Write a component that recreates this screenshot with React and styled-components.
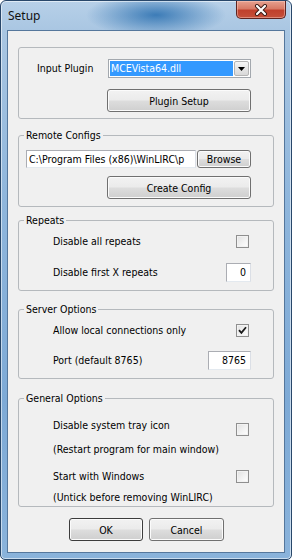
import styled, { createGlobalStyle } from 'styled-components';

const GlobalStyle = createGlobalStyle`
  html, body {
    margin: 0;
    padding: 0;
    background: #ffffff;
  }
  body {
    font-family: "DejaVu Sans Condensed", "Liberation Sans", sans-serif;
    font-size: 10.5px;
    color: #000;
  }
`;

const Window = styled.div`
  width: 292px;
  height: 560px;
  box-sizing: border-box;
  border: 1px solid #28476a;
  border-radius: 6px 6px 5px 5px;
  padding: 0 6px 6px 6px;
  display: flex;
  flex-direction: column;
  overflow: hidden;
  background:
    radial-gradient(ellipse 70px 22px at 155px 14px, rgba(40, 110, 175, 0.85), rgba(40, 110, 175, 0) 100%),
    linear-gradient(180deg, #b7d0e8 0px, #a9c6e2 30px, #8fb6dc 200px, #7eaad6 400px, #8ab3db 560px);
  box-shadow: inset 0 0 0 1px rgba(255, 255, 255, 0.55);
`;

const TitleBar = styled.div`
  height: 29px;
  display: flex;
  align-items: flex-start;
  justify-content: space-between;
`;

const Title = styled.span`
  font-family: "Noto Sans", "Open Sans", sans-serif;
  font-size: 12px;
  line-height: 16px;
  margin: 7px 0 0 1px;
  color: #111;
`;

const CloseButton = styled.div`
  width: 50px;
  height: 18px;
  margin: 0 -1px 0 0;
  box-sizing: border-box;
  border: 1px solid #5e2420;
  border-top: none;
  border-radius: 0 0 5px 5px;
  background: linear-gradient(180deg, #e6a190 0%, #d77a66 45%, #c0402c 55%, #c4503a 100%);
  box-shadow: inset 0 0 0 1px rgba(255, 210, 200, 0.45);
  display: flex;
  align-items: center;
  justify-content: center;
`;

const Client = styled.div`
  flex: 1;
  background: #f0f0f0;
  border: 1px solid #55779c;
  padding: 0 10px;
  display: flex;
  flex-direction: column;
`;

const Group = styled.fieldset`
  margin: ${p => p.$mt}px 0 0;
  padding: ${p => p.$pt}px 22px ${p => p.$pb}px 0;
  border: 1px solid #b5b9bd;
  border-radius: 3px;
  min-width: 0;
  display: flex;
  flex-direction: column;
`;

const Legend = styled.legend`
  margin-left: 5px;
  padding: 0 2px;
  line-height: 13px;
`;

const Row = styled.div`
  display: flex;
  align-items: ${p => (p.$top ? 'flex-start' : 'center')};
  margin-top: ${p => p.$mt || 0}px;
  padding-left: ${p => (p.$indent === undefined ? 34 : p.$indent)}px;
`;

const Label = styled.span`
  flex: 1;
  line-height: 13px;
  white-space: nowrap;
`;

const Note = styled.div`
  line-height: 13px;
  margin-top: ${p => p.$mt}px;
  padding-left: 34px;
  white-space: nowrap;
`;

const Button = styled.div`
  width: ${p => p.$w}px;
  height: ${p => p.$h || 23}px;
  box-sizing: border-box;
  margin-left: ${p => (p.$right ? 'auto' : '0')};
  border: 1px solid ${p => (p.$primary ? '#3c3c3c' : '#707070')};
  border-radius: 3px;
  background: linear-gradient(180deg, #f2f2f2 0%, #ebebeb 48%, #dddddd 52%, #cfcfcf 100%);
  box-shadow: inset 0 0 0 1px #fbfbfb;
  display: flex;
  align-items: center;
  justify-content: center;
  flex-shrink: 0;
`;

const Combo = styled.div`
  width: 143px;
  height: 19px;
  box-sizing: border-box;
  margin-left: auto;
  border: 1px solid #a3a8ae;
  background: #fff;
  display: flex;
  align-items: stretch;
  padding: 1px;
`;

const ComboValue = styled.div`
  flex: 1;
  background: #3399ff;
  color: #fff;
  line-height: 15px;
  padding-left: 1px;
  margin-right: 1px;
`;

const ComboArrow = styled.div`
  width: 15px;
  box-sizing: border-box;
  border: 1px solid #b4b4b4;
  border-radius: 2px;
  background: linear-gradient(180deg, #f6f6f6 0%, #e6e6e6 50%, #d8d8d8 100%);
  display: flex;
  align-items: center;
  justify-content: center;
`;

const Edit = styled.div`
  width: ${p => p.$w}px;
  height: ${p => p.$h}px;
  box-sizing: border-box;
  flex-shrink: 0;
  border: 1px solid #abadb3;
  border-right-color: #dbdfe6;
  border-bottom-color: #e3e9ef;
  background: #fff;
  line-height: ${p => p.$h - 2}px;
  padding: 0 ${p => (p.$alignRight ? 4 : 2)}px;
  text-align: ${p => (p.$alignRight ? 'right' : 'left')};
  white-space: nowrap;
  overflow: hidden;
`;

const Check = styled.div`
  width: 13px;
  height: 13px;
  box-sizing: border-box;
  flex-shrink: 0;
  margin-top: ${p => p.$mt || 0}px;
  margin-right: 2px;
  border: 1px solid #8f8f8f;
  background: linear-gradient(135deg, #e0e0e0 0%, #f4f4f4 60%, #ffffff 100%);
  box-shadow: inset 0 0 0 1px #f2f2f2;
  display: flex;
  align-items: center;
  justify-content: center;
`;

const Footer = styled.div`
  display: flex;
  justify-content: center;
  gap: 6px;
  margin-top: 11px;
  padding-left: 1px;
`;

const CheckBox = ({ checked, mt }) => (
  <Check $mt={mt}>
    {checked && (
      <svg width="9" height="9" viewBox="0 0 9 9">
        <path d="M1 4.2 L3.4 6.8 L8 1.2" fill="none" stroke="#1a1a1a" strokeWidth="1.8" />
      </svg>
    )}
  </Check>
);

export default function App() {
  return (
    <>
      <GlobalStyle />
      <Window>
        <TitleBar>
          <Title>Setup</Title>
          <CloseButton>
            <svg width="14" height="12" viewBox="0 0 14 12">
              <path d="M3 2 L11 10 M11 2 L3 10" stroke="#3a1a14" strokeWidth="4" strokeLinecap="round" />
              <path d="M3 2 L11 10 M11 2 L3 10" stroke="#ffffff" strokeWidth="2.2" strokeLinecap="round" />
            </svg>
          </CloseButton>
        </TitleBar>
        <Client>
          <Group $mt={16} $pt={11} $pb={6}>
            <Row $indent={18}>
              <Label>Input Plugin</Label>
              <Combo>
                <ComboValue>MCEVista64.dll</ComboValue>
                <ComboArrow>
                  <svg width="7" height="4" viewBox="0 0 7 4">
                    <path d="M0 0 L7 0 L3.5 4 Z" fill="#000" />
                  </svg>
                </ComboArrow>
              </Combo>
            </Row>
            <Row $mt={11} $indent={0}>
              <Button $w={144} $right>Plugin Setup</Button>
            </Row>
          </Group>

          <Group $mt={10} $pt={8} $pb={7}>
            <Legend>Remote Configs</Legend>
            <Row $indent={7}>
              <Edit $w={170} $h={18}>C:\Program Files (x86)\WinLIRC\p</Edit>
              <Button $w={54} $h={18} $right>Browse</Button>
            </Row>
            <Row $mt={8} $indent={0}>
              <Button $w={144} $right>Create Config</Button>
            </Row>
          </Group>

          <Group $mt={7} $pt={8} $pb={8}>
            <Legend>Repeats</Legend>
            <Row>
              <Label>Disable all repeats</Label>
              <CheckBox />
            </Row>
            <Row $mt={15}>
              <Label>Disable first X repeats</Label>
              <Edit $w={25} $h={19} $alignRight>0</Edit>
            </Row>
          </Group>

          <Group $mt={12} $pt={8} $pb={8}>
            <Legend>Server Options</Legend>
            <Row>
              <Label>Allow local connections only</Label>
              <CheckBox checked />
            </Row>
            <Row $mt={14}>
              <Label>Port (default 8765)</Label>
              <Edit $w={43} $h={19} $alignRight>8765</Edit>
            </Row>
          </Group>

          <Group $mt={13} $pt={14} $pb={2}>
            <Legend>General Options</Legend>
            <Row $top>
              <Label>Disable system tray icon</Label>
              <CheckBox mt={4} />
            </Row>
            <Note $mt={7}>(Restart program for main window)</Note>
            <Row $top $mt={14}>
              <Label>Start with Windows</Label>
              <CheckBox />
            </Row>
            <Note $mt={8}>(Untick before removing WinLIRC)</Note>
          </Group>

          <Footer>
            <Button $w={74} $primary>OK</Button>
            <Button $w={75}>Cancel</Button>
          </Footer>
        </Client>
      </Window>
    </>
  );
}
